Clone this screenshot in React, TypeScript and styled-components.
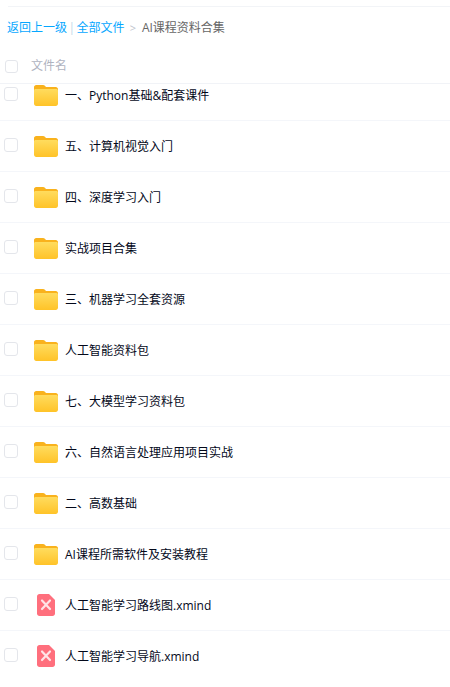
import { createGlobalStyle } from "styled-components";
import styled from "styled-components";

const GlobalStyle = createGlobalStyle`
  html, body {
    margin: 0;
    padding: 0;
    background: #fff;
    overflow: hidden;
  }
  body {
    font-family: "Open Sans", "Noto Sans CJK SC", sans-serif;
  }
`;

const Page = styled.div`
  width: 450px;
  height: 687px;
  overflow: hidden;
  display: flex;
  flex-direction: column;
`;

const TopRule = styled.div`
  height: 1px;
  margin: 6px 0 0 8px;
  background: #f2f4f7;
`;

const Crumbs = styled.div`
  display: flex;
  align-items: center;
  height: 26px;
  margin-top: 7px;
  padding-left: 7px;
  font-size: 12px;
  color: #666;
`;

const CrumbLink = styled.span`
  color: #06a7ff;
`;

const CrumbBar = styled.span`
  color: #c4d8e8;
  margin: 0 1.500px;
`;

const CrumbArrow = styled.span`
  color: #c0c4cc;
  margin: 0 6px 0 5px;
  font-size: 11px;
`;

const Header = styled.div`
  display: flex;
  align-items: center;
  height: 33px;
  margin-top: 10px;
  padding-left: 5px;
  border-bottom: 1px solid #f1f3f7;
  font-size: 12px;
  color: #afb3bf;
`;

const HeaderLabel = styled.span`
  margin-left: 13px;
  position: relative;
  top: -2px;
`;

const Check = styled.span<{ $inRow?: boolean }>`
  width: ${(p) => (p.$inRow ? 14 : 13)}px;
  height: ${(p) => (p.$inRow ? 14 : 13)}px;
  flex: none;
  box-sizing: border-box;
  border: 1px solid #e4e6eb;
  border-radius: 3px;
  background: #fff;
  ${(p) => (p.$inRow ? "position: relative; top: -1px;" : "")}
`;

const Scroller = styled.div`
  flex: 1;
  overflow: hidden;
`;

const List = styled.div`
  margin-top: -14px;
`;

const Row = styled.div`
  display: flex;
  align-items: center;
  height: 50px;
  padding-left: 4px;
  border-bottom: 1px solid #f4f6fa;
  font-size: 12px;
  color: #03081a;

  &:last-child {
    border-bottom: none;
  }
`;

const IconSlot = styled.span`
  width: 24px;
  height: 22px;
  margin-left: 16px;
  flex: none;
  display: flex;
  align-items: center;
  justify-content: center;
`;

const Name = styled.span`
  margin-left: 7px;
`;

function FolderIcon() {
  return (
    <svg width="24" height="21" viewBox="0 0 24 21">
      <path d="M2.200 0h6.800c.8 0 1.400.3 1.900.8l1.100 1.200h9.800c1.200 0 2.200 1 2.200 2.200v2.800H0V2.200C0 1 1 0 2.200 0z" fill="#f9b21d" />
      <path d="M0 5.500c0-1 .8-1.500 1.800-1.500h20.400c1 0 1.800.5 1.800 1.500v13.300c0 1.200-1 2.200-2.200 2.200H2.200C1 21 0 20 0 18.800z" fill="url(#folderFill)" />
      <defs>
        <linearGradient id="folderFill" x1="0" y1="0" x2="0" y2="1">
          <stop offset="0" stopColor="#ffdc5e" />
          <stop offset="1" stopColor="#ffc328" />
        </linearGradient>
      </defs>
    </svg>
  );
}

function XmindIcon() {
  return (
    <svg width="18" height="22" viewBox="0 0 18 22">
      <path d="M2.500 0H12l6 6v13.500c0 1.400-1.100 2.500-2.500 2.500h-13C1.100 22 0 20.900 0 19.500v-17C0 1.100 1.100 0 2.500 0z" fill="#ff6f7d" />
      <path d="M5 6.500l8 8.500M13 6.500l-8 8.500" stroke="#ffe3e6" strokeWidth="2.200" strokeLinecap="round" />
    </svg>
  );
}

const files: { name: string; kind: "folder" | "xmind" }[] = [
  { name: "一、Python基础&配套课件", kind: "folder" },
  { name: "五、计算机视觉入门", kind: "folder" },
  { name: "四、深度学习入门", kind: "folder" },
  { name: "实战项目合集", kind: "folder" },
  { name: "三、机器学习全套资源", kind: "folder" },
  { name: "人工智能资料包", kind: "folder" },
  { name: "七、大模型学习资料包", kind: "folder" },
  { name: "六、自然语言处理应用项目实战", kind: "folder" },
  { name: "二、高数基础", kind: "folder" },
  { name: "AI课程所需软件及安装教程", kind: "folder" },
  { name: "人工智能学习路线图.xmind", kind: "xmind" },
  { name: "人工智能学习导航.xmind", kind: "xmind" },
];

export default function App() {
  return (
    <Page>
      <GlobalStyle />
      <TopRule />
      <Crumbs>
        <CrumbLink>返回上一级</CrumbLink>
        <CrumbBar>|</CrumbBar>
        <CrumbLink>全部文件</CrumbLink>
        <CrumbArrow>&gt;</CrumbArrow>
        <span>AI课程资料合集</span>
      </Crumbs>
      <Header>
        <Check />
        <HeaderLabel>文件名</HeaderLabel>
      </Header>
      <Scroller>
        <List>
          {files.map((f) => (
            <Row key={f.name}>
              <Check $inRow />
              <IconSlot>{f.kind === "folder" ? <FolderIcon /> : <XmindIcon />}</IconSlot>
              <Name>{f.name}</Name>
            </Row>
          ))}
        </List>
      </Scroller>
    </Page>
  );
}
